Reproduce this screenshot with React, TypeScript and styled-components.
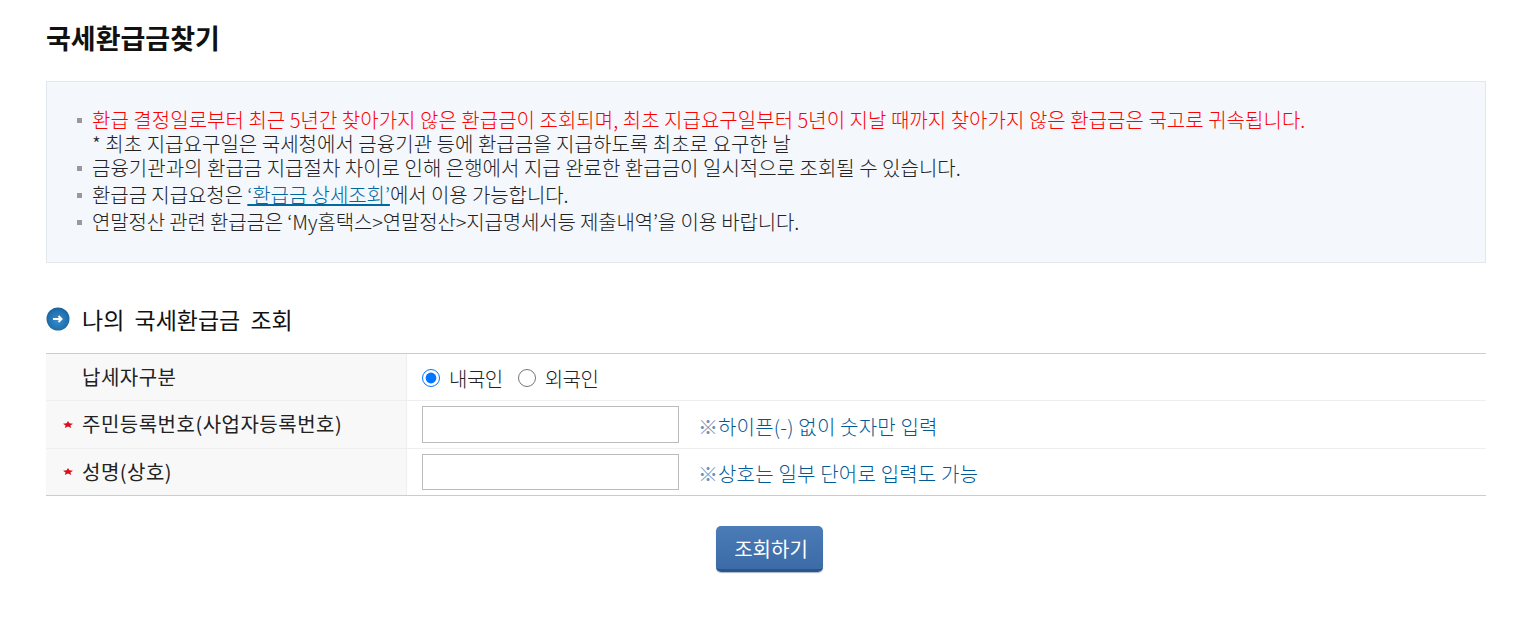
import styled, { createGlobalStyle } from 'styled-components';

const GlobalStyle = createGlobalStyle`
  html, body {
    margin: 0;
    padding: 0;
    background: #fff;
    font-family: 'Noto Sans CJK KR', 'Liberation Sans', sans-serif;
  }
`;

const notices = [
  { text: '환급 결정일로부터 최근 5년간 찾아가지 않은 환급금이 조회되며, 최초 지급요구일부터 5년이 지날 때까지 찾아가지 않은 환급금은 국고로 귀속됩니다.', red: true, sub: '* 최초 지급요구일은 국세청에서 금융기관 등에 환급금을 지급하도록 최초로 요구한 날', spacing: 0.035 },
  { text: '금융기관과의 환급금 지급절차 차이로 인해 은행에서 지급 완료한 환급금이 일시적으로 조회될 수 있습니다.', gap: true, spacing: 0.02 },
  { link: true, gap: true, spacing: -0.07 },
  { text: '연말정산 관련 환급금은 ‘My홈택스>연말정산>지급명세서등 제출내역’을 이용 바랍니다.', spacing: -0.15 },
];

const RequiredStar = () => (
  <StarIcon viewBox="0 0 10 7">
    <path d="M5 0l1.4 2.2L10 2.8 7.4 4.4 8.2 7 5 5.6 1.8 7l.8-2.6L0 2.8l3.6-.6z" fill="#d9101c" />
  </StarIcon>
);

const App = () => {
  return (
    <>
      <GlobalStyle />
      <Container>
        <Title>국세환급금찾기</Title>
        <NoticeBox>
          <NoticeList>
            {notices.map((item, idx) => (
              <NoticeItem key={idx} $red={item.red} $gap={item.gap} $spacing={item.spacing}>
                {item.link ? (
                  <>
                    환급금 지급요청은 <NoticeLink href="#">‘환급금 상세조회’</NoticeLink>에서 이용 가능합니다.
                  </>
                ) : (
                  item.text
                )}
                {item.sub && <SubText>{item.sub}</SubText>}
              </NoticeItem>
            ))}
          </NoticeList>
        </NoticeBox>
        <SectionHead>
          <svg width="24" height="24" viewBox="0 0 24 24">
            <defs>
              <radialGradient id="ball" cx="0.5" cy="0.55" r="0.55">
                <stop offset="0" stopColor="#3a8ccb" />
                <stop offset="0.8" stopColor="#1f6fae" />
                <stop offset="1" stopColor="#1c5d92" />
              </radialGradient>
            </defs>
            <circle cx="12" cy="12" r="11.5" fill="url(#ball)" />
            <path d="M7 12h8.5M12.5 9l3 3-3 3" fill="none" stroke="#fff" strokeWidth="2" />
          </svg>
          <SectionTitle>나의 국세환급금 조회</SectionTitle>
        </SectionHead>
        <FormTable>
          <Row>
            <LabelCell>납세자구분</LabelCell>
            <ValueCell>
              <RadioLabel>
                <Radio type="radio" name="kind" defaultChecked />내국인
              </RadioLabel>
              <RadioLabel>
                <Radio type="radio" name="kind" />외국인
              </RadioLabel>
            </ValueCell>
          </Row>
          <Row $tall>
            <LabelCell>
              <RequiredStar />
              주민등록번호(사업자등록번호)
            </LabelCell>
            <ValueCell>
              <TextInput type="text" />
              <Hint><HintMark>※</HintMark>하이픈(-) 없이 숫자만 입력</Hint>
            </ValueCell>
          </Row>
          <Row>
            <LabelCell>
              <RequiredStar />
              성명(상호)
            </LabelCell>
            <ValueCell>
              <TextInput type="text" />
              <Hint><HintMark>※</HintMark>상호는 일부 단어로 입력도 가능</Hint>
            </ValueCell>
          </Row>
        </FormTable>
        <ButtonRow>
          <SearchButton type="button">조회하기</SearchButton>
        </ButtonRow>
      </Container>
    </>
  );
};

export default App;

const Container = styled.div`
  width: 1440px;
  margin-left: 46px;
  height: 621px;
  overflow: hidden;
`;

const Title = styled.h1`
  margin: 0;
  padding-top: 19px;
  height: 81px;
  box-sizing: border-box;
  color: #111;
  font-size: 27px;
  font-weight: 700;
  line-height: 37px;
`;

const NoticeBox = styled.div`
  box-sizing: border-box;
  height: 182px;
  padding: 26px 30px 0;
  border: 1px solid #e3e8ee;
  background: #f4f7fc;
`;

const NoticeList = styled.ul`
  margin: 0;
  padding: 0;
  list-style: none;
`;

const NoticeItem = styled.li<{ $red?: boolean; $gap?: boolean; $spacing?: number }>`
  position: relative;
  padding-left: 15px;
  padding-bottom: ${(p) => (p.$gap ? '3px' : '0')};
  color: ${(p) => (p.$red ? '#f00' : '#222')};
  font-size: 20px;
  font-weight: 300;
  line-height: 24px;
  letter-spacing: ${(p) => p.$spacing ?? 0}px;
  white-space: nowrap;

  &::before {
    content: '';
    position: absolute;
    left: 0;
    top: 10px;
    width: 5px;
    height: 5px;
    background: #999;
  }
`;

const SubText = styled.div`
  color: #222;
`;

const NoticeLink = styled.a`
  color: #00699f;
`;

const SectionHead = styled.div`
  display: flex;
  align-items: center;
  gap: 12px;
  margin-top: 43px;
  height: 26px;
`;

const SectionTitle = styled.h2`
  margin: 0;
  padding-bottom: 1px;
  color: #111;
  font-size: 23px;
  font-weight: 400;
  word-spacing: 5px;
`;

const FormTable = styled.div`
  margin-top: 21px;
  border-top: 1px solid #ccc;
  border-bottom: 1px solid #ccc;
`;

const Row = styled.div<{ $tall?: boolean }>`
  display: flex;
  height: ${(p) => (p.$tall ? '47px' : '46px')};

  & + & {
    border-top: 1px solid #eee;
  }
`;

const LabelCell = styled.div`
  position: relative;
  box-sizing: border-box;
  display: flex;
  align-items: center;
  width: 361px;
  padding: 0 0 2px 36px;
  border-right: 1px solid #eee;
  background: #f8f8f8;
  color: #222;
  font-size: 20px;
  font-weight: 400;
  letter-spacing: 0.5px;
`;

const StarIcon = styled.svg`
  position: absolute;
  left: 17px;
  top: 50%;
  width: 10px;
  height: 7px;
  margin-top: -4px;
`;

const ValueCell = styled.div`
  display: flex;
  align-items: center;
  padding: 5px 0 5px 15px;
  color: #222;
  font-size: 20px;
  font-weight: 300;
`;

const RadioLabel = styled.label`
  display: flex;
  align-items: center;
  margin: 2px 15px 0 0;
  letter-spacing: -0.5px;
`;

const Radio = styled.input`
  width: 18px;
  height: 18px;
  margin: 0 9px 0 0;
`;

const TextInput = styled.input`
  box-sizing: border-box;
  align-self: stretch;
  width: 257px;
  border: 1px solid #bbb;
`;

const Hint = styled.span`
  margin-left: 19px;
  padding-top: 3px;
  color: #005a94;
  font-size: 20px;
  letter-spacing: 0.2px;
`;

const HintMark = styled.span`
  color: #6f90b8;
  font-weight: 400;
  letter-spacing: 0;
`;

const ButtonRow = styled.div`
  display: flex;
  justify-content: center;
  margin-top: 30px;
  padding-left: 7px;
`;

const SearchButton = styled.button`
  width: 107px;
  height: 46px;
  padding: 2px 0 0 3px;
  border: 0;
  border-bottom: 3px solid #2c5688;
  border-radius: 5px;
  background: linear-gradient(#4b7cb8, #3c6ba7);
  box-shadow: 0 1px 1px rgba(60, 90, 130, 0.45);
  color: #fff;
  font-family: inherit;
  font-size: 20px;
  font-weight: 400;
`;
